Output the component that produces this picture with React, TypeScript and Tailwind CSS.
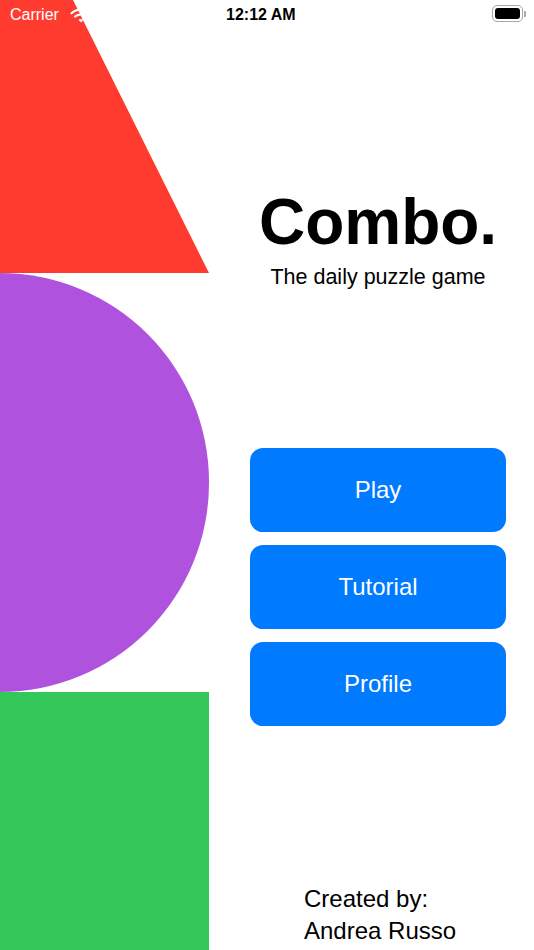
import { FC } from 'react';

const font = { fontFamily: '"Liberation Sans", Arial, sans-serif' };

const MenuButton: FC<{ label: string }> = ({ label }) => (
  <button className="h-[84px] w-full rounded-[13px] bg-[#007aff] text-[24px] text-white">{label}</button>
);

const StatusBar: FC = () => (
  <div className="absolute inset-x-0 top-0 h-[30px]">
    <span className="absolute left-[10px] top-[5px] text-[16px] leading-[20px] text-white">Carrier</span>
    <svg className="absolute left-[70px] top-[8px]" width="22" height="15" viewBox="0 0 22 15" fill="none">
      <path d="M1.5 5.2C6.8 0.4 15.2 0.4 20.5 5.2" stroke="white" strokeWidth="2.2" strokeLinecap="round" />
      <path d="M5 8.6C8.4 5.6 13.6 5.6 17 8.6" stroke="white" strokeWidth="2.2" strokeLinecap="round" />
      <path d="M8.4 11.8C9.9 10.6 12.1 10.6 13.6 11.8L11 14.4Z" fill="white" />
    </svg>
    <span className="absolute left-[226px] top-[5px] text-[16px] font-semibold leading-[20px] text-black">12:12 AM</span>
    <div className="absolute left-[492px] top-[5px] flex items-center">
      <div className="h-[17px] w-[31px] rounded-[5px] border border-[#a8a8a8] p-[2px]">
        <div className="h-full w-full rounded-[3px] bg-black" />
      </div>
      <div className="ml-[1px] h-[6px] w-[2px] rounded-r-[1px] bg-[#a8a8a8]" />
    </div>
  </div>
);

export default function App() {
  return (
    <div className="relative flex h-[950px] w-[534px] overflow-hidden bg-white" style={font}>
      {/* shapes */}
      <div className="flex w-[209px] shrink-0 flex-col">
        <div className="h-[273px] bg-[#ff3b30] [clip-path:polygon(0_0,73px_0,209px_100%,0_100%)]" />
        <div className="h-[419px] rounded-r-[210px] bg-[#af52de]" />
        <div className="flex-1 bg-[#34c759]" />
      </div>

      {/* menu */}
      <div className="flex flex-1 flex-col pl-[41px] pr-[28px] pt-[190px] pb-[3px]">
        <h1 className="text-center text-[64px] font-bold leading-[64px] text-black">Combo.</h1>
        <p className="mt-[11px] text-center text-[21.5px] leading-[24px] text-black">The daily puzzle game</p>

        <div className="mt-[159px] flex flex-col gap-[13px]">
          <MenuButton label="Play" />
          <MenuButton label="Tutorial" />
          <MenuButton label="Profile" />
        </div>

        <div className="mt-auto pl-[54px] text-[24px] leading-[32px] text-black">
          <div>Created by:</div>
          <div>Andrea Russo</div>
        </div>
      </div>

      <StatusBar />
    </div>
  );
}
